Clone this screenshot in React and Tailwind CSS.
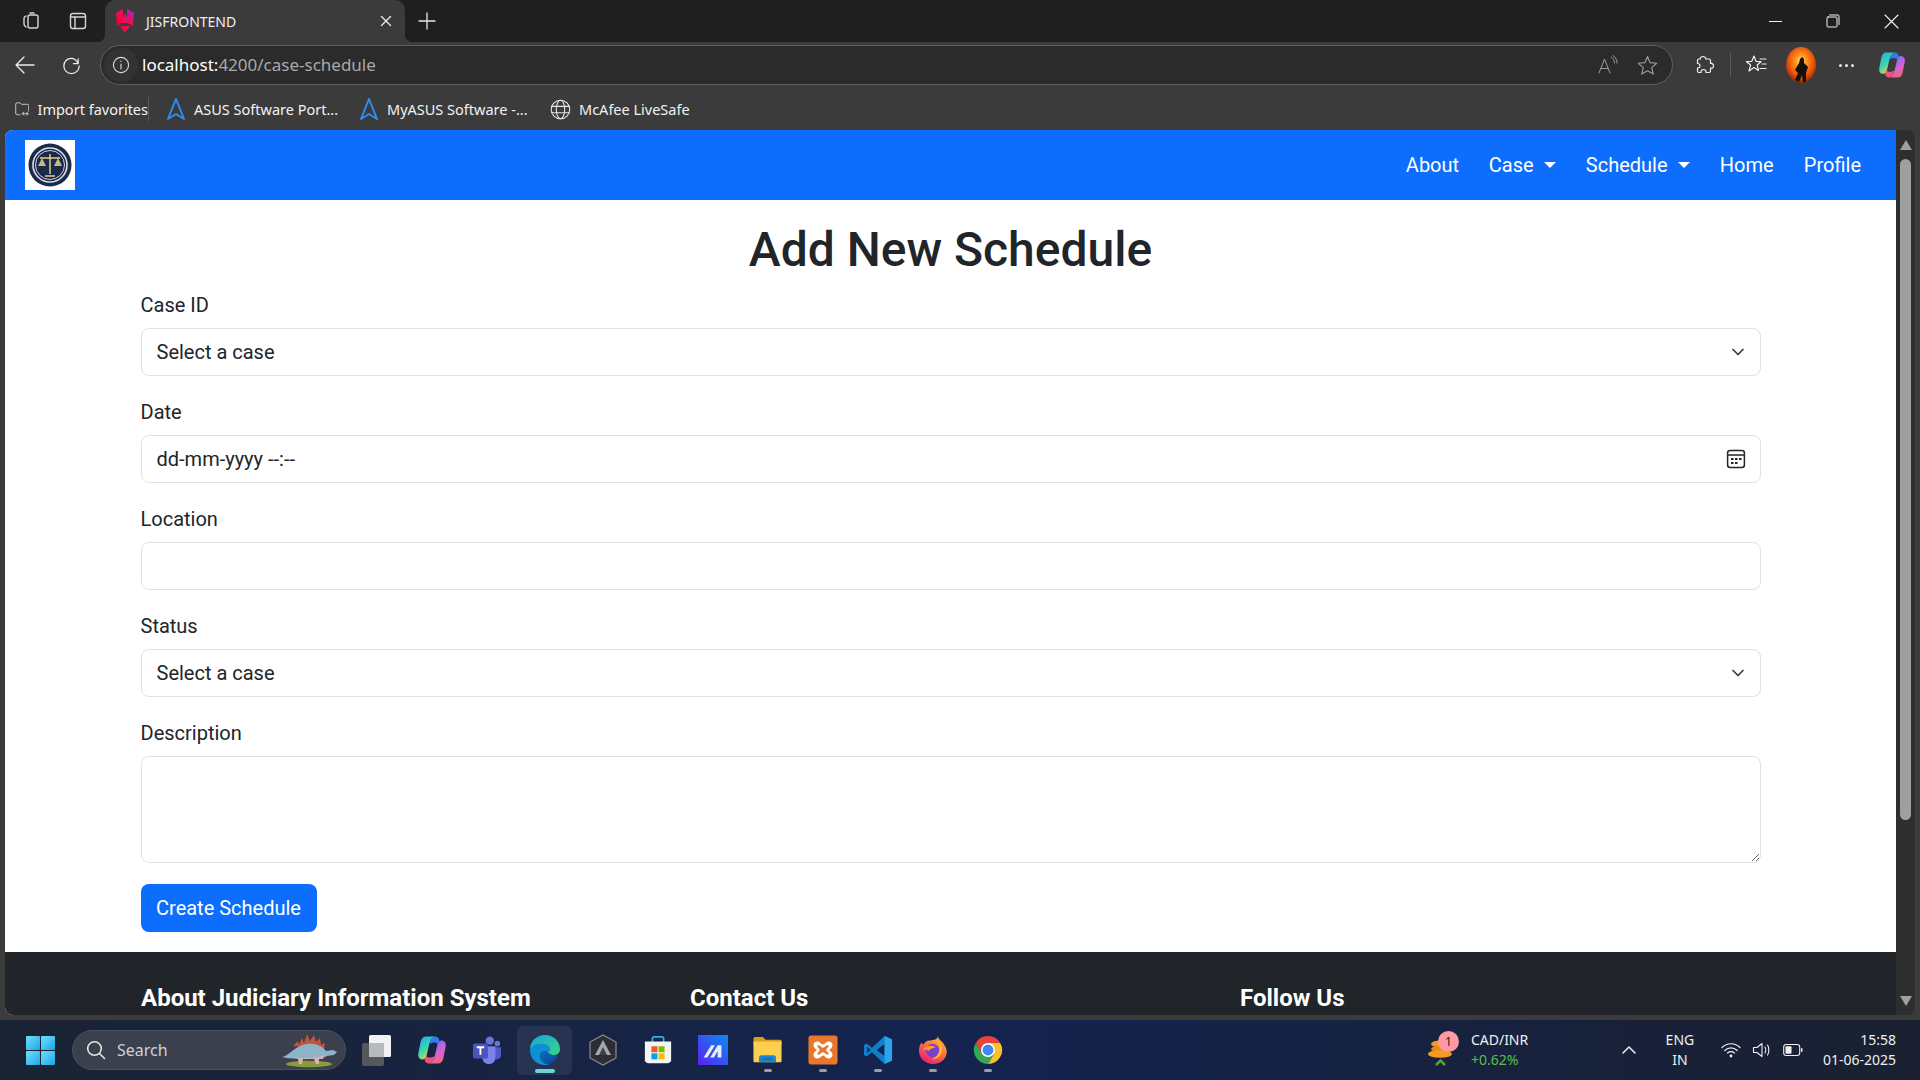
import { ChevronDown } from 'lucide-react';

const uiFont = 'font-["Noto_Sans","Open_Sans",sans-serif]';

function Stroke({ size = 20, className = '', children, view = '0 0 20 20', width = 1.4 }) {
    return (
        <svg width={size} height={size} viewBox={view} fill="none" stroke="currentColor" strokeWidth={width} strokeLinecap="round" strokeLinejoin="round" className={className}>
            {children}
        </svg>
    );
}

function AngularIcon() {
    return (
        <svg width="20" height="26" viewBox="0 0 20 26">
            <defs>
                <linearGradient id="ang" x1="0" y1="1" x2="1" y2="0">
                    <stop offset="0" stopColor="#e40035" />
                    <stop offset="0.5" stopColor="#f60a48" />
                    <stop offset="1" stopColor="#8b2bf5" />
                </linearGradient>
            </defs>
            <path d="M8 1 L1 5 L2 18 L6.5 15.5 L8 12 Z M12 1 L19 5 L18 18 L13.5 15.5 L12 12 Z" fill="url(#ang)" />
            <path d="M10 5 L14 15 H6 Z M5 18 L15 18 L10 25 Z" fill="url(#ang)" />
        </svg>
    );
}

function CopilotIcon({ size = 28, id = 'cp' }) {
    return (
        <svg width={size} height={size} viewBox="0 0 30 30">
            <defs>
                <linearGradient id={`${id}a`} x1="0" y1="0" x2="0.6" y2="1">
                    <stop offset="0" stopColor="#1fa6f0" />
                    <stop offset="0.55" stopColor="#38d6b0" />
                    <stop offset="1" stopColor="#f4d13c" />
                </linearGradient>
                <linearGradient id={`${id}b`} x1="0.3" y1="0" x2="0.8" y2="1">
                    <stop offset="0" stopColor="#7b6cf0" />
                    <stop offset="0.55" stopColor="#d662d8" />
                    <stop offset="1" stopColor="#f66a4f" />
                </linearGradient>
            </defs>
            <path d="M9 1.5 H18 C14 3 13 6 12 10 L9.5 21 C9 23.5 7 25 4.5 24.5 C2 24 0.8 21.5 1.3 18.5 L3.6 7 C4.3 3.5 6 1.5 9 1.5 Z" fill={`url(#${id}a)`} />
            <path d="M21 28.5 H12 C16 27 17 24 18 20 L20.5 9 C21 6.5 23 5 25.5 5.5 C28 6 29.2 8.5 28.7 11.5 L26.4 23 C25.7 26.5 24 28.5 21 28.5 Z" fill={`url(#${id}b)`} />
            <path d="M18 1.5 C20.5 1.5 22 3 22.4 5.5 L20.5 9 C19 7 16 7 12.4 9 C13.2 5.5 14.5 2.5 18 1.5 Z" fill="#2d7ef0" />
            <path d="M12 28.5 C9.5 28.5 8 27 7.6 24.5 L9.5 21 C11 23 14 23 17.6 21 C16.8 24.5 15.5 27.5 12 28.5 Z" fill="#f0527c" />
        </svg>
    );
}

function EdgeIcon() {
    return (
        <svg width="32" height="32" viewBox="0 0 32 32">
            <defs>
                <linearGradient id="edgeA" x1="0.1" y1="0" x2="0.9" y2="1">
                    <stop offset="0" stopColor="#1aa7d8" />
                    <stop offset="1" stopColor="#36d58a" />
                </linearGradient>
                <linearGradient id="edgeB" x1="0" y1="0" x2="1" y2="1">
                    <stop offset="0" stopColor="#0c6fc0" />
                    <stop offset="1" stopColor="#0b3f8f" />
                </linearGradient>
            </defs>
            <path d="M1 15 C1.5 6.5 8 1 16 1 C25 1 31 7.5 31 15.5 C31 19 28 21 24.5 21 C21.5 21 19 20 19 18.5 C21 17 21 14 19 12 C16.5 9.5 11 9.5 7 12 C4 14 2 14.5 1 15 Z" fill="url(#edgeA)" />
            <path d="M1 15 C5 9 15 8 19 12 C21 14 21 17 19 18.5 C16 16 11 17 11 21.5 C11 26 15 30 20 30.8 C18.5 31 17 31 16 31 C7 31 0.5 24 1 15 Z" fill="#0f8fd6" />
            <path d="M11 21.5 C11 17 16 16 19 18.5 C20 20 22 21 24.5 21 C26.5 21 28.5 20.5 29 20.5 C27.5 26 24 29.5 20 30.8 C15 30 11 26 11 21.5 Z" fill="url(#edgeB)" />
        </svg>
    );
}

function ChromeIcon() {
    return (
        <svg width="30" height="30" viewBox="0 0 32 32">
            <path d="M3 8.5 A15 15 0 0 1 29 8.5 L16 8.5 L9.5 19.75 Z" fill="#e8433a" />
            <path d="M29 8.5 A15 15 0 0 1 16 31 L22.5 19.75 L16 8.5 Z" fill="#fbc02d" />
            <path d="M16 31 A15 15 0 0 1 3 8.5 L9.5 19.75 L22.5 19.75 Z" fill="#34a853" />
            <circle cx="16" cy="16" r="7.5" fill="#fff" />
            <circle cx="16" cy="16" r="5.8" fill="#4285f4" />
        </svg>
    );
}

function FirefoxIcon() {
    return (
        <svg width="30" height="30" viewBox="0 0 32 32">
            <defs>
                <linearGradient id="fx" x1="0.8" y1="0" x2="0.2" y2="1">
                    <stop offset="0" stopColor="#ffc02e" />
                    <stop offset="0.45" stopColor="#ff7139" />
                    <stop offset="1" stopColor="#e31587" />
                </linearGradient>
            </defs>
            <path d="M21 1 C22 5 25 6 27.5 9.5 C30.5 13.5 31 17 30.5 19.5 C29.5 26.5 23.5 31 16 31 C7.5 31 1 24.5 1 17 C1 13 2 10 4 8 C4.5 9.5 5.5 10 6 10 C7.5 7 10.5 5.5 13 6 C17 5 21 5 21 1 Z" fill="url(#fx)" />
            <circle cx="15.5" cy="16.5" r="7.2" fill="#7a3fd0" />
            <path d="M8.5 13 C11 11 15 11 19 13 C16 14 13 14.5 11 17 C9.5 16 8 15 5 15 C6 14 7.5 13.5 8.5 13 Z" fill="#ff9a2e" />
            <path d="M21 6 C25 9 27 14 25 19 C24 23 20 26 15 26 C19 24 23 20 23 15 C23 12 22 9 21 6 Z" fill="#ffb52e" />
        </svg>
    );
}

function VsCodeIcon() {
    return (
        <svg width="30" height="30" viewBox="0 0 32 32">
            <path d="M23 1 L31 4.8 V27.2 L23 31 L9.5 18.5 L4 23 L1 21.3 V10.7 L4 9 L9.5 13.5 Z M23 9.5 L14.5 16 L23 22.5 Z M4.5 12.5 V19.5 L8 16 Z" fill="#0f7fcb" fillRule="evenodd" />
            <path d="M23 1 L31 4.8 V27.2 L23 31 Z" fill="#2ea3e8" />
        </svg>
    );
}

function XamppIcon() {
    return (
        <svg width="30" height="30" viewBox="0 0 32 32">
            <rect x="0.5" y="0.5" width="31" height="31" rx="3" fill="#e8762b" />
            <path d="M10 7 C13 7 13.5 10 16 10 C18.5 10 19 7 22 7 C25.5 7 27 10 25.5 13 C25 14.5 23 15 23 16 C23 17 25 17.5 25.5 19 C27 22 25.5 25 22 25 C19 25 18.5 22 16 22 C13.5 22 13 25 10 25 C6.5 25 5 22 6.5 19 C7 17.5 9 17 9 16 C9 15 7 14.5 6.5 13 C5 10 6.5 7 10 7 Z M11 11 C9.5 11 9.5 12.5 11 13.5 C13 15 13 17 11 18.5 C9.5 19.5 9.5 21 11 21 C13 21 14 18.5 16 18.5 C18 18.5 19 21 21 21 C22.5 21 22.5 19.5 21 18.5 C19 17 19 15 21 13.5 C22.5 12.5 22.5 11 21 11 C19 11 18 13.5 16 13.5 C14 13.5 13 11 11 11 Z" fill="#fff" fillRule="evenodd" />
        </svg>
    );
}

function FolderIcon() {
    return (
        <svg width="31" height="30" viewBox="0 0 32 32">
            <path d="M1 4 C1 3 2 2 3 2 H11 L14 5 H30 C31 5 31 6 31 7 V10 H1 Z" fill="#d9a11b" />
            <rect x="1" y="7" width="30" height="22" rx="1" fill="#fcd04f" />
            <path d="M9 24 C9 22.5 10 21.5 11.5 21.5 H24.5 C26 21.5 27 22.5 27 24 V29 H5 H9 Z" fill="#1a86d0" transform="translate(-2 0)" />
            <rect x="11" y="25" width="10" height="1" fill="#0b5a9e" />
        </svg>
    );
}

function StoreIcon() {
    return (
        <svg width="30" height="30" viewBox="0 0 32 32">
            <path d="M10 8 V4 C10 3 11 2 12 2 H20 C21 2 22 3 22 4 V8" fill="none" stroke="#2ab5e8" strokeWidth="1.8" />
            <path d="M2 7 H30 V27 C30 29 28 30 26 30 H6 C4 30 2 29 2 27 Z" fill="#f5f5f5" />
            <rect x="9" y="12" width="6.4" height="6.4" fill="#ef5a29" />
            <rect x="16.6" y="12" width="6.4" height="6.4" fill="#7fb900" />
            <rect x="9" y="19.6" width="6.4" height="6.4" fill="#00a3ee" />
            <rect x="16.6" y="19.6" width="6.4" height="6.4" fill="#ffb900" />
        </svg>
    );
}

function MyAsusIcon() {
    return (
        <svg width="30" height="30" viewBox="0 0 32 32">
            <defs>
                <linearGradient id="ma" x1="0" y1="1" x2="1" y2="0">
                    <stop offset="0" stopColor="#5a20f0" />
                    <stop offset="1" stopColor="#0c8df0" />
                </linearGradient>
            </defs>
            <rect width="32" height="32" fill="url(#ma)" />
            <path d="M6 24 L14 11 H18 L10 24 Z M13 24 L21 11 H25 L25 24 H21 L21 17 L17 24 Z" fill="#e8ecff" />
        </svg>
    );
}

function ArmouryIcon() {
    return (
        <svg width="28" height="32" viewBox="0 0 28 32">
            <path d="M14 1 L27 8 V24 L14 31 L1 24 V8 Z" fill="#2c2e33" stroke="#8a8d92" strokeWidth="1.2" />
            <path d="M14 6 L22 21 H6 Z" fill="#a5a8ad" />
            <path d="M14 13 L18 21 H10 Z" fill="#3d4046" />
        </svg>
    );
}

function TeamsIcon() {
    return (
        <svg width="30" height="30" viewBox="0 0 32 32">
            <circle cx="19" cy="6" r="4.5" fill="#6d73d6" />
            <circle cx="27" cy="9" r="3" fill="#6d73d6" />
            <path d="M20 13 H31 V21 C31 24 29 26 26 26 C23 26 20 24 20 21 Z" fill="#5059c9" />
            <path d="M11 12 H25 V24 C25 28 22 31 18 31 C14 31 11 28 11 24 Z" fill="#7b83eb" />
            <rect x="1" y="9" width="16" height="16" rx="2" fill="#4b53bc" />
            <path d="M5 13 H13 M9 13 V21" stroke="#fff" strokeWidth="2" />
        </svg>
    );
}

function TaskViewIcon() {
    return (
        <svg width="30" height="32" viewBox="0 0 30 32">
            <rect x="0" y="9" width="22" height="23" rx="2" fill="#55575c" />
            <rect x="7" y="1" width="22" height="22" rx="1.5" fill="#f2f2f2" />
            <rect x="7" y="9" width="15" height="14" fill="#b9babd" />
        </svg>
    );
}

function StartIcon() {
    const cell = 'h-[14px] w-[14px] rounded-[1px] bg-gradient-to-br from-[#6ce0fb] to-[#14a5ea]';
    return (
        <div className="grid grid-cols-2 gap-px">
            <div className={cell} />
            <div className={cell} />
            <div className={cell} />
            <div className={cell} />
        </div>
    );
}

function Dino() {
    return (
        <svg width="58" height="36" viewBox="0 0 58 36">
            <ellipse cx="28" cy="32" rx="23" ry="3.2" fill="#8c9a3e" />
            <path d="M12 14 L17 9 L18 13 L21 6 L23 11 L26 2 L29 9 L33 3 L35 10 L39 6 L40 13 L44 11 L43 17 Z" fill="#c4553a" />
            <path d="M1 25 C8 24 13 14 26 12 C35 11 42 15 45 19 L52 18 L56 20 L53 23 L46 24 C40 28 14 28 1 25 Z" fill="#8fb3c9" />
            <path d="M14 25 C22 27 36 27 43 23 L42 27 L38 27 L38 32 L35 32 L33 27 L22 27 L21 32 L18 32 L17 27 Z" fill="#d9b2b5" />
        </svg>
    );
}

function LogoMark() {
    return (
        <svg width="44" height="44" viewBox="0 0 44 44">
            <circle cx="22" cy="22" r="21.5" fill="#1b2a4a" />
            <circle cx="22" cy="22" r="17" fill="none" stroke="#d8dde6" strokeWidth="1.6" />
            <circle cx="22" cy="22" r="14.5" fill="#1b2a4a" stroke="#ffffff" strokeWidth="0.8" />
            <path d="M22 11 V31 M12 15 H32 M17 33 H27" stroke="#e7cf8b" strokeWidth="1.5" fill="none" />
            <path d="M10 23 H18 L14 15 Z M26 23 H34 L30 15 Z" fill="#e7cf8b" opacity="0.85" />
        </svg>
    );
}

function Avatar() {
    return (
        <svg width="30" height="36" viewBox="0 0 30 36">
            <defs>
                <radialGradient id="av" cx="0.5" cy="0.4" r="0.6">
                    <stop offset="0" stopColor="#fff3c4" />
                    <stop offset="0.25" stopColor="#ffa21f" />
                    <stop offset="0.7" stopColor="#e9510c" />
                    <stop offset="1" stopColor="#8c2606" />
                </radialGradient>
            </defs>
            <ellipse cx="15" cy="18" rx="15" ry="18" fill="url(#av)" />
            <path d="M16 10 L18 12 L18 16 L22 20 L20 26 L20 35 L17 35 L16 28 L13 35 L9 33 L12 26 L9 23 L13 16 L14 12 Z" fill="#15100c" />
        </svg>
    );
}

function AsusArrow() {
    return (
        <svg width="20" height="24" viewBox="0 0 20 24" fill="none" stroke="#2f8df0" strokeWidth="2" strokeLinejoin="round">
            <path d="M10 2 L2 22 L10 17 L18 22 Z" />
        </svg>
    );
}

function Bookmark({ icon, label, width }) {
    return (
        <div className="flex items-center gap-[8px]" style={{ width }}>
            {icon}
            <span className="text-[14.5px] leading-none whitespace-nowrap text-[#f2f2f2]">{label}</span>
        </div>
    );
}

function BrowserChrome() {
    return (
        <div className={`${uiFont} text-white`}>
            {/* tab strip */}
            <div className="flex h-[42px] items-stretch bg-[#1f1f1f]">
                <div className="flex w-[105px] items-center pl-[21px] gap-[27px] text-[#d6d6d6]">
                    <Stroke size={20}>
                        <rect x="7" y="4" width="10" height="13" rx="2" />
                        <path d="M5 5 L3.5 6 C3 6.5 3 7 3 8 V13 C3 14 3.5 15 5 16 M9 2 H13" />
                    </Stroke>
                    <Stroke size={20}>
                        <rect x="2.5" y="2.5" width="15" height="15" rx="2.5" />
                        <path d="M2.5 6 H17.5 M7 6 V17.5" />
                    </Stroke>
                </div>
                <div className="relative flex w-[300px] items-center rounded-t-[10px] bg-[#3b3b3b] pl-[10px] pr-[12px]">
                    <span className="absolute bottom-0 -left-2 h-2 w-2 bg-[radial-gradient(circle_at_0_0,#1f1f1f_8px,#3b3b3b_8.5px)]" />
                    <span className="absolute bottom-0 -right-2 h-2 w-2 bg-[radial-gradient(circle_at_100%_0,#1f1f1f_8px,#3b3b3b_8.5px)]" />
                    <AngularIcon />
                    <span className="ml-[11px] text-[14px] text-[#f0f0f0]">JISFRONTEND</span>
                    <Stroke size={12} view="0 0 12 12" className="ml-auto mr-[1px] text-[#e8e8e8]">
                        <path d="M1.5 1.5 L10.5 10.5 M10.5 1.5 L1.5 10.5" />
                    </Stroke>
                </div>
                <div className="flex items-center pl-[13px] text-[#e8e8e8]">
                    <Stroke size={18} view="0 0 18 18" width={1.3}>
                        <path d="M9 1 V17 M1 9 H17" />
                    </Stroke>
                </div>
                <div className="ml-auto flex items-center text-[#f2f2f2]">
                    <div className="flex w-[58px] justify-center">
                        <div className="h-px w-[13px] bg-[#f2f2f2]" />
                    </div>
                    <div className="flex w-[58px] justify-center">
                        <Stroke size={14} view="0 0 14 14" width={1}>
                            <rect x="1" y="3" width="10" height="10" rx="1" />
                            <path d="M3.5 1 H12 C12.6 1 13 1.4 13 2 V10.5" />
                        </Stroke>
                    </div>
                    <div className="flex w-[58px] justify-center">
                        <Stroke size={15} view="0 0 15 15" width={1.1}>
                            <path d="M1 1 L14 14 M14 1 L1 14" />
                        </Stroke>
                    </div>
                </div>
            </div>

            {/* address bar */}
            <div className="flex h-[46px] items-center bg-[#3b3b3b]">
                <div className="flex w-[100px] items-center pl-[14px] gap-[25px] text-[#ececec]">
                    <Stroke size={22} view="0 0 22 22" width={1.3}>
                        <path d="M20 11 H2 M10 3 L2 11 L10 19" />
                    </Stroke>
                    <Stroke size={21} view="0 0 22 22" width={1.3}>
                        <path d="M18 4 V9 H13 M18 9 C16.5 5.5 13.5 3.5 10.5 3.5 C6.5 3.5 3 7 3 11.5 C3 16 6.5 19.5 11 19.5 C15.5 19.5 19 16 19 11.5" />
                    </Stroke>
                </div>
                <div className="flex h-[40px] w-[1573px] items-center rounded-full border border-[#5f5f5f] bg-[#2b2b2b] pr-[14px]">
                    <div className="ml-[3px] flex h-[34px] w-[34px] items-center justify-center rounded-full bg-[#333333] text-[#d8d8d8]">
                        <Stroke size={18} view="0 0 18 18" width={1.1}>
                            <circle cx="9" cy="9" r="7.6" />
                            <path d="M9 8 V13 M9 5 V5.5" />
                        </Stroke>
                    </div>
                    <span className="ml-[4px] text-[17px] text-[#a9a9a9]">
                        <span className="text-white">localhost:</span>4200/case-schedule
                    </span>
                    <div className="ml-auto flex items-center gap-[19px] text-[#9a9a9a]">
                        <Stroke size={20} view="0 0 20 20" width={1}>
                            <path d="M1 18 L6.5 4 L12 18 M3 13.5 H10 M13 2 C15 3 16.5 5 16.5 8 M15 0.5 C17.5 2 19 5 19 8" />
                        </Stroke>
                        <Stroke size={21} view="0 0 20 20" width={1.1}>
                            <path d="M10 1.5 L12.5 7.3 L18.8 7.9 L14 12 L15.5 18.2 L10 15 L4.5 18.2 L6 12 L1.2 7.9 L7.5 7.3 Z" />
                        </Stroke>
                    </div>
                </div>
                <div className="flex flex-1 items-center pl-[22px] text-[#efefef]">
                    <Stroke size={20} view="0 0 20 20" width={1.2}>
                        <path d="M8 1.5 C10 1.5 11 3 10.7 4 H14 C15 4 15.5 4.5 15.5 5.5 V8.5 C17.5 8 18.5 9.5 18.5 11 C18.5 12.5 17.5 13.5 15.5 13 V16 C15.5 17 15 17.5 14 17.5 H11 C11.3 15.5 10 14.5 8.5 14.5 C7 14.5 5.8 15.5 6 17.5 H4 C3 17.5 2.5 17 2.5 16 V13 C4 13.3 5 12 5 10.7 C5 9.5 4 8.3 2.5 8.5 V5.5 C2.5 4.5 3 4 4 4 H5.3 C5 3 6 1.5 8 1.5 Z" />
                    </Stroke>
                    <div className="ml-[15px] h-[24px] w-px bg-[#5a5a5a]" />
                    <Stroke size={22} view="0 0 22 22" width={1.2} className="ml-[14px]">
                        <path d="M9 2 L11 7.3 L16 7.7 L12.2 11 L13.4 16.5 L9 13.6 L4 17 L5.6 11 L1.5 7.7 L6.8 7.3 Z M15 5 H21 M17 10 H21 M15 14.5 H21" />
                    </Stroke>
                    <div className="ml-[19px] flex"><Avatar /></div>
                    <div className="ml-[23px] flex gap-[3px]">
                        <div className="h-[3px] w-[3px] rounded-full bg-[#e8e8e8]" />
                        <div className="h-[3px] w-[3px] rounded-full bg-[#e8e8e8]" />
                        <div className="h-[3px] w-[3px] rounded-full bg-[#e8e8e8]" />
                    </div>
                    <div className="ml-[24px] flex"><CopilotIcon id="cpTop" /></div>
                </div>
            </div>

            {/* favorites bar */}
            <div className="flex h-[42px] items-center bg-[#3b3b3b] pl-[15px]">
                <Bookmark
                    width={133}
                    label="Import favorites"
                    icon={
                        <Stroke size={20} view="0 0 20 20" width={1.1} className="text-[#e8e8e8]">
                            <path d="M1 16 V3 C1 2 2 1.5 3 1.5 H7 L9 3.5 H17 C18 3.5 19 4 19 5 V13 M1 16 C1 17 2 18 3 18 H7 M10 16.5 H18 M12 14.5 L10 16.5 L12 18.5 M16 14.5 L18 16.5 L16 18.5" />
                        </Stroke>
                    }
                />
                <div className="mr-[17px] h-[24px] w-px bg-[#5a5a5a]" />
                <Bookmark width={193} label="ASUS Software Port..." icon={<AsusArrow />} />
                <Bookmark width={191} label="MyASUS Software -..." icon={<AsusArrow />} />
                <Bookmark
                    label="McAfee LiveSafe"
                    icon={
                        <Stroke size={21} view="0 0 20 20" width={1} className="text-[#e8e8e8]">
                            <circle cx="10" cy="10" r="8.8" />
                            <ellipse cx="10" cy="10" rx="4" ry="8.8" />
                            <path d="M1.5 7 H18.5 M1.5 13 H18.5" />
                        </Stroke>
                    }
                />
            </div>
        </div>
    );
}

function NavItem({ label, caret, width }) {
    return (
        <div className="flex items-center" style={{ width }}>
            <span>{label}</span>
            {caret && <span className="ml-[10px] h-0 w-0 border-x-[6px] border-t-[6px] border-x-transparent border-t-white" />}
        </div>
    );
}

function Field({ label, children }) {
    return (
        <div>
            <label className="mb-[8px] block text-[20px] leading-[30px] text-[#212529]">{label}</label>
            {children}
        </div>
    );
}

const controlBox = 'flex h-[48px] items-center justify-between rounded-lg border border-[#dee2e6] bg-white pl-[15px] text-[20px] text-[#212529]';

function SelectBox() {
    return (
        <div className={`${controlBox} pr-[12px]`}>
            <span>Select a case</span>
            <ChevronDown size={20} strokeWidth={2} className="text-[#343a40]" />
        </div>
    );
}

function PageContent() {
    return (
        <div className='h-[885px] flex-1 overflow-hidden rounded-l-lg bg-white font-["Roboto",sans-serif]'>
            <nav className="flex h-[70px] items-center justify-between bg-[#0d6efd] pl-[20px] pr-[35px] text-[20px] text-white">
                <div className="flex h-[50px] w-[50px] items-center justify-center bg-white">
                    <LogoMark />
                </div>
                <div className="flex items-center">
                    <NavItem label="About" width={83} />
                    <NavItem label="Case" caret width={97} />
                    <NavItem label="Schedule" caret width={134} />
                    <NavItem label="Home" width={84} />
                    <NavItem label="Profile" />
                </div>
            </nav>

            <div className="mx-auto w-[1620px] pt-[21px]">
                <h1 className="mb-[11px] text-center text-[48px] leading-[58px] font-medium text-[#212529]">Add New Schedule</h1>
                <form className="flex flex-col gap-[21px]">
                    <Field label="Case ID"><SelectBox /></Field>
                    <Field label="Date">
                        <div className={`${controlBox} pr-[14px]`}>
                            <span>dd-mm-yyyy --:--</span>
                            <svg width="20" height="20" viewBox="0 0 20 20">
                                <rect x="1.6" y="1.6" width="16.8" height="16.8" rx="2.5" fill="none" stroke="#212529" strokeWidth="1.5" />
                                <path d="M2 6 H18" stroke="#212529" strokeWidth="1.5" />
                                <path d="M5 9 H7.5 V11 H5 Z M9 9 H11.5 V11 H9 Z M13 9 H15.5 V11 H13 Z M5 13 H7.5 V15 H5 Z M9 13 H11.5 V15 H9 Z" fill="#212529" />
                            </svg>
                        </div>
                    </Field>
                    <Field label="Location">
                        <input className="block h-[48px] w-full rounded-lg border border-[#dee2e6] bg-white px-[15px] text-[20px] outline-none" />
                    </Field>
                    <Field label="Status"><SelectBox /></Field>
                    <Field label="Description">
                        <textarea className="block h-[107px] w-full resize rounded-lg border border-[#dee2e6] bg-white px-[15px] py-[8px] text-[20px] outline-none" />
                    </Field>
                    <div>
                        <button type="button" className="h-[48px] w-[176px] rounded-lg bg-[#0d6efd] text-[20px] text-white">Create Schedule</button>
                    </div>
                </form>
            </div>

            <footer className="mt-[20px] flex h-[200px] bg-[#212529] pt-[32px] pl-[136px] text-[24px] leading-[29px] font-bold text-white">
                <h5 className="w-[549px]">About Judiciary Information System</h5>
                <h5 className="w-[550px]">Contact Us</h5>
                <h5>Follow Us</h5>
            </footer>
        </div>
    );
}

function Scrollbar() {
    return (
        <div className="flex w-[19px] flex-col items-center rounded-r-lg bg-[#2e2e2e] pt-[10px] pb-[9px] pl-[-1px]">
            <span className="h-0 w-0 border-x-[6px] border-b-[10px] border-x-transparent border-b-[#9f9f9f]" />
            <div className="mt-[9px] h-[661px] w-[11px] rounded-full bg-[#9f9f9f]" />
            <span className="mt-auto h-0 w-0 border-x-[6px] border-t-[10px] border-x-transparent border-t-[#9f9f9f]" />
        </div>
    );
}

function TaskIcon({ children, active, running }) {
    return (
        <div className={`relative flex h-[49px] w-[55px] items-center justify-center ${active ? 'mx-[3px] w-[49px] rounded-md bg-white/7' : ''}`}>
            {children}
            {active && <span className="absolute bottom-[2px] h-[4px] w-[20px] rounded-full bg-[#6fd3dc]" />}
            {running && <span className="absolute bottom-[3px] h-[3px] w-[8px] rounded-full bg-[#9a9da5]" />}
        </div>
    );
}

function Taskbar() {
    return (
        <div className={`${uiFont} flex h-[60px] items-center bg-gradient-to-r from-[#1a2333] via-[#14234f] to-[#1a2030] pl-[26px] text-white`}>
            <StartIcon />
            <div className="ml-[17px] flex h-[40px] w-[274px] items-center rounded-full border border-[#4a4f5c] bg-[#3a404d] pl-[13px] pr-[6px]">
                <Stroke size={20} view="0 0 20 20" width={1.6} className="text-[#e4e4e4]">
                    <circle cx="8.5" cy="8.5" r="6.8" />
                    <path d="M13.5 13.5 L18.5 18.5" />
                </Stroke>
                <span className="ml-[11px] text-[16px] text-[#cfd2d8]">Search</span>
                <div className="ml-auto flex"><Dino /></div>
            </div>
            <div className="ml-[3px] flex items-center">
                <TaskIcon><TaskViewIcon /></TaskIcon>
                <TaskIcon><CopilotIcon size={30} id="cpBar" /></TaskIcon>
                <TaskIcon><TeamsIcon /></TaskIcon>
                <TaskIcon active><EdgeIcon /></TaskIcon>
                <TaskIcon><ArmouryIcon /></TaskIcon>
                <TaskIcon><StoreIcon /></TaskIcon>
                <TaskIcon><MyAsusIcon /></TaskIcon>
                <TaskIcon running><FolderIcon /></TaskIcon>
                <TaskIcon running><XamppIcon /></TaskIcon>
                <TaskIcon running><VsCodeIcon /></TaskIcon>
                <TaskIcon running><FirefoxIcon /></TaskIcon>
                <TaskIcon running><ChromeIcon /></TaskIcon>
            </div>

            <div className="ml-auto flex items-center pr-[24px]">
                <div className="relative mr-[14px] h-[36px] w-[30px]">
                    <svg width="30" height="36" viewBox="0 0 30 36">
                        <ellipse cx="13" cy="12" rx="9" ry="3.5" fill="#f59a23" />
                        <ellipse cx="14" cy="17" rx="10" ry="3.5" fill="#e98a16" />
                        <ellipse cx="13" cy="22" rx="12" ry="3.8" fill="#f59a23" />
                        <path d="M9 33 L13.5 28.5 L18 33" fill="none" stroke="#5aa02c" strokeWidth="2.5" />
                    </svg>
                    <span className="absolute -top-[1px] left-[11px] flex h-[21px] w-[21px] items-center justify-center rounded-full bg-[#ff9aa5] text-[12px] text-[#222]">1</span>
                </div>
                <div className="flex w-[150px] flex-col text-[14px] leading-[20px]">
                    <span className="text-[#f0f0f0]">CAD/INR</span>
                    <span className="text-[#52c24a]">+0.62%</span>
                </div>
                <Stroke size={16} view="0 0 16 16" width={1.5} className="mr-[28px] text-[#efefef]">
                    <path d="M2 11 L8 5 L14 11" />
                </Stroke>
                <div className="mr-[26px] flex w-[30px] flex-col items-center text-[14px] leading-[20px] text-[#f0f0f0]">
                    <span>ENG</span>
                    <span>IN</span>
                </div>
                <div className="flex items-center gap-[11px] text-[#f0f0f0]">
                    <Stroke size={20} view="0 0 20 20" width={1.2}>
                        <path d="M1 7.5 C6 2.5 14 2.5 19 7.5 M3.8 10.5 C7.5 7 12.5 7 16.2 10.5 M6.5 13 C8.5 11.5 11.5 11.5 13.5 13" />
                        <circle cx="10" cy="16" r="0.8" fill="currentColor" />
                    </Stroke>
                    <Stroke size={20} view="0 0 20 20" width={1.1}>
                        <path d="M1.5 7.5 H5 L10 3.5 V16.5 L5 12.5 H1.5 Z M13 7 C14 8.5 14 11.5 13 13 M15.5 5 C17.3 7.5 17.3 12.5 15.5 15" />
                    </Stroke>
                    <svg width="20" height="14" viewBox="0 0 20 14" fill="none">
                        <rect x="0.7" y="1.5" width="16" height="11" rx="2.5" stroke="#f0f0f0" strokeWidth="1.1" />
                        <rect x="2.5" y="3.2" width="6" height="7.6" rx="1" fill="#f0f0f0" />
                        <rect x="18" y="5" width="1.5" height="4" rx="0.7" fill="#f0f0f0" />
                    </svg>
                </div>
                <div className="ml-[20px] flex flex-col items-end text-[14px] leading-[20px] text-[#f0f0f0]">
                    <span>15:58</span>
                    <span>01-06-2025</span>
                </div>
            </div>
        </div>
    );
}

export default function App() {
    return (
        <div className="flex h-[1080px] w-[1920px] flex-col overflow-hidden bg-[#3b3b3b]">
            <BrowserChrome />
            <div className="flex h-[890px] items-start bg-[#3b3b3b] pl-[5px] pr-[5px]">
                <PageContent />
                <div className="flex h-[885px]"><Scrollbar /></div>
            </div>
            <Taskbar />
        </div>
    );
}
